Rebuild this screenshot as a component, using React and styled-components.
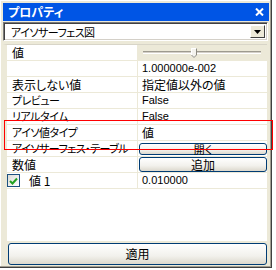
import styled, { createGlobalStyle } from "styled-components";

const GlobalStyle = createGlobalStyle`
  body {
    margin: 0;
    background: #ffffff;
    font-family: "Noto Sans CJK JP", "Liberation Sans", sans-serif;
    font-size: 12px;
    font-feature-settings: "palt";
  }
`;

const Frame = styled.div`
  position: relative;
  width: 272px;
  height: 268px;
  box-sizing: border-box;
  padding: 3px 2px 2px 3px;
  background: #ece9d8;
  border-right: 1px solid #404040;
  border-bottom: 1px solid #404040;
  box-shadow: inset -1px -1px 0 #a09d90, inset 1px 1px 0 #ffffff;
  display: flex;
  flex-direction: column;
`;

const TitleBar = styled.div`
  height: 18px;
  background: #0055e5;
  color: #ffffff;
  font-weight: bold;
  display: flex;
  align-items: center;
  justify-content: space-between;
  padding: 0 5px 0 5px;
  line-height: 18px;
`;

// katakana in the old UI font is much narrower than in Noto
const Kana = styled.span`
  font-size: 11px;
  letter-spacing: -0.5px;
`;

const Combo = styled.div`
  margin-top: 1px;
  margin-right: 1px;
  height: 19px;
  box-sizing: border-box;
  background: #ffffff;
  border-top: 1px solid #7a7a7a;
  border-left: 1px solid #7a7a7a;
  border-right: 1px solid #ffffff;
  border-bottom: 1px solid #ffffff;
  box-shadow: inset 1px 1px 0 #404040, inset -1px -1px 0 #d4d0c8;
  display: flex;
  align-items: center;
  justify-content: space-between;
  padding: 0 2px 0 7px;
`;

const DropButton = styled.div`
  width: 15px;
  height: 13px;
  box-sizing: border-box;
  background: #ece9d8;
  border-top: 1px solid #ffffff;
  border-left: 1px solid #ffffff;
  border-right: 1px solid #404040;
  border-bottom: 1px solid #404040;
  display: flex;
  align-items: center;
  justify-content: center;
`;

const Grid = styled.div`
  margin-top: 3px;
  margin-right: 2px;
  height: 197px;
  box-sizing: border-box;
  background: #ffffff;
  border-left: 4px solid #ece9d8;
  border-top: 1px solid #d8d5c8;
`;

const Row = styled.div`
  display: grid;
  grid-template-columns: 131px 1fr;
  height: 16px;
  box-sizing: border-box;
  border-bottom: 1px solid #ece9d8;
`;

const Label = styled.div`
  display: flex;
  align-items: center;
  gap: 9px;
  padding-left: ${(p) => (p.$check ? "0" : "5px")};
  border-right: 1px solid #ece9d8;
  white-space: nowrap;
  overflow: hidden;
  line-height: 15px;
`;

const Value = styled.div`
  display: flex;
  align-items: center;
  padding: 0 ${(p) => (p.$button ? "0" : "4px")};
  background: ${(p) => (p.$face ? "#ece9d8" : "#ffffff")};
  font-family: ${(p) =>
    p.$latin ? '"Liberation Sans", sans-serif' : "inherit"};
  font-size: ${(p) => (p.$latin ? "11px" : "12px")};
  white-space: nowrap;
  line-height: 15px;
`;

const Track = styled.div`
  position: relative;
  flex: 1;
  margin: 0 2px 0 1px;
  height: 3px;
  box-sizing: border-box;
  border-top: 1px solid #9d9a8f;
  border-bottom: 1px solid #ffffff;
  background: #d4d0c8;
`;

const Thumb = styled.svg`
  position: absolute;
  left: 48px;
  top: -4px;
`;

const XpButton = styled.div`
  flex: 1;
  height: ${(p) => p.$h}px;
  margin: 0 0 0 1px;
  box-sizing: border-box;
  border: 1px solid #003c74;
  border-radius: 3px;
  background: linear-gradient(#ffffff, #f2f1ec 60%, #dcd8cd);
  display: flex;
  justify-content: center;
  align-items: center;
  font-size: ${(p) => (p.$h < 13 ? "11px" : "12px")};
  line-height: ${(p) => p.$h - 2}px;
  color: #000000;
`;

const CheckBox = styled.div`
  width: 13px;
  height: 13px;
  box-sizing: border-box;
  border: 1px solid #1c5180;
  background: linear-gradient(135deg, #dcdcd7, #ffffff);
  display: flex;
  align-items: center;
  justify-content: center;
`;

const Footer = styled.div`
  flex: 1;
  display: flex;
  align-items: flex-end;
  padding: 0 2px 0 5px;
`;

const ApplyButton = styled(XpButton)`
  margin: 0;
`;

const Highlight = styled.div`
  position: absolute;
  left: 4px;
  top: 120px;
  width: 269px;
  height: 30px;
  box-sizing: border-box;
  border: 1px solid #ff0000;
  pointer-events: none;
`;

const rows = [
  { label: "表示しない値", value: "指定値以外の値" },
  { label: <Kana>プレビュー</Kana>, key: "preview", value: "False", latin: true },
  { label: <Kana>リアルタイム</Kana>, key: "realtime", value: "False", latin: true },
  { label: <Kana>アイソ値タイプ</Kana>, key: "type", value: "値" },
];

export default function App() {
  return (
    <>
      <GlobalStyle />
      <Frame>
        <TitleBar>
          <span>プロパティ</span>
          <svg width="9" height="8" viewBox="0 0 9 8">
            <path d="M1 0.5 L8 7.5 M8 0.5 L1 7.5" stroke="#fff" strokeWidth="2" />
          </svg>
        </TitleBar>

        <Combo>
          <Kana>アイソサーフェス図</Kana>
          <DropButton>
            <svg width="7" height="4" viewBox="0 0 7 4">
              <path d="M0 0 H7 L3.5 4 Z" fill="#000" />
            </svg>
          </DropButton>
        </Combo>

        <Grid>
          <Row>
            <Label>値</Label>
            <Value $face>
              <Track>
                <Thumb width="6" height="10" viewBox="0 0 6 10">
                  <path d="M0 0 H6 V7 L3 10 L0 7 Z" fill="#f4f3ee" />
                  <path d="M0.5 7 V0.5 H5.5" stroke="#ffffff" fill="none" />
                  <path d="M5.5 0.5 V7 L3 9.5 L0.5 7" stroke="#8c8a80" fill="none" />
                </Thumb>
              </Track>
            </Value>
          </Row>
          <Row>
            <Label />
            <Value $latin>1.000000e-002</Value>
          </Row>
          {rows.map((r) => (
            <Row key={r.key || r.label}>
              <Label>{r.label}</Label>
              <Value $latin={r.latin}>{r.value}</Value>
            </Row>
          ))}
          <Row>
            <Label>
              <Kana>アイソサーフェス・テーブル</Kana>
            </Label>
            <Value $button>
              <XpButton $h={12}>開く</XpButton>
            </Value>
          </Row>
          <Row>
            <Label>数値</Label>
            <Value $button>
              <XpButton $h={15}>追加</XpButton>
            </Value>
          </Row>
          <Row>
            <Label $check>
              <CheckBox>
                <svg width="9" height="8" viewBox="0 0 9 8">
                  <path
                    d="M1 4 L3.5 6.5 L8 1.5"
                    stroke="#21a121"
                    strokeWidth="2"
                    fill="none"
                  />
                </svg>
              </CheckBox>
              <span>値 1</span>
            </Label>
            <Value $latin>0.010000</Value>
          </Row>
        </Grid>

        <Footer>
          <ApplyButton $h={22}>適用</ApplyButton>
        </Footer>

        <Highlight />
      </Frame>
    </>
  );
}
